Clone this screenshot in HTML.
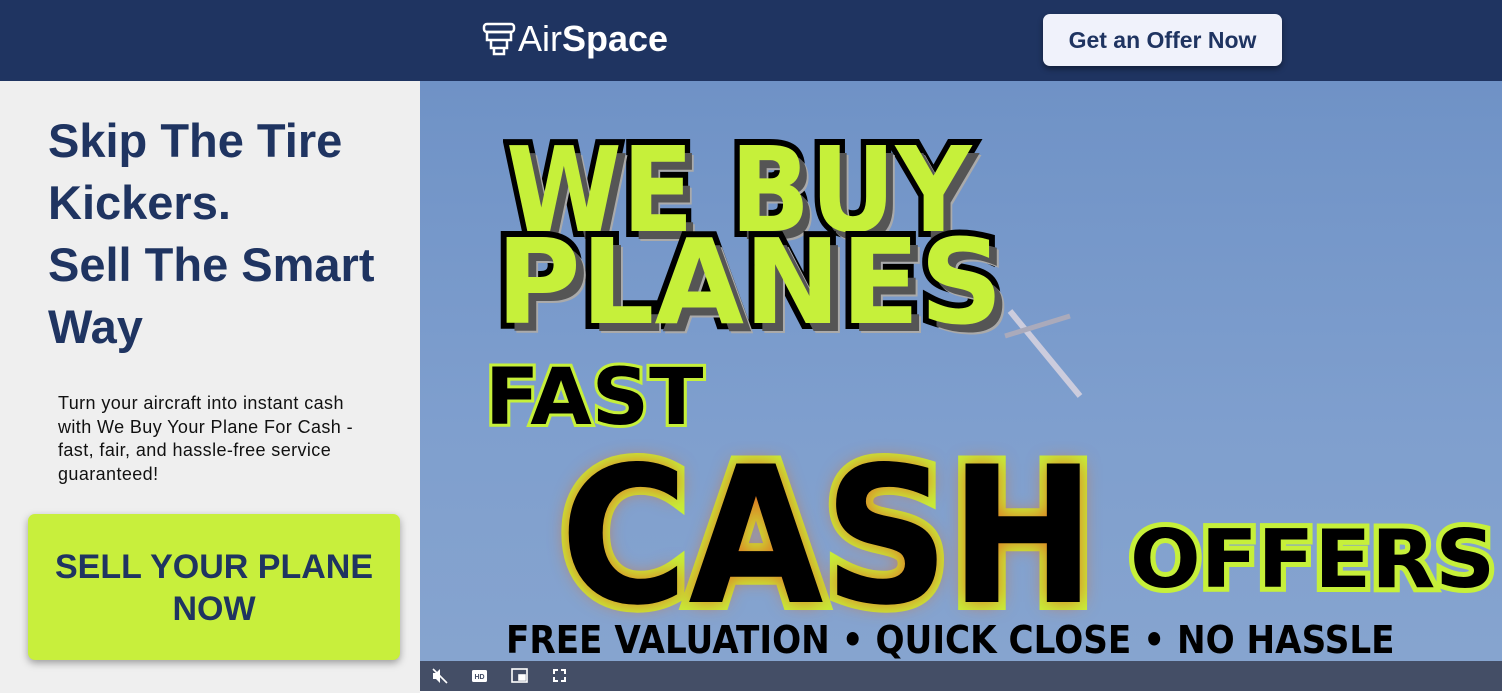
<!DOCTYPE html>
<html><head><style>
*{margin:0;padding:0;box-sizing:border-box}
body{width:1502px;height:693px;overflow:hidden;background:#fff;font-family:"Liberation Sans",sans-serif;position:relative}
.hdr{position:absolute;left:0;top:0;width:1502px;height:81px;background:#1f3461}
.logo{position:absolute;left:482px;top:18px;color:#fff;font-size:36px;display:flex;align-items:center}
.btn1{position:absolute;left:1043px;top:14px;width:239px;height:52px;background:#f0f2fb;border-radius:7px;color:#1f3461;font-weight:bold;font-size:23px;text-align:center;line-height:52px;box-shadow:0 3px 6px rgba(0,0,0,.4)}
.left{position:absolute;left:0;top:81px;width:420px;height:612px;background:#efefef}
h1{position:absolute;left:48px;top:110px;color:#1f3461;font-size:47px;line-height:62px;font-weight:bold;width:370px}
.p{position:absolute;left:58px;top:392px;font-size:18px;line-height:23.5px;color:#111;width:320px;letter-spacing:.4px}
.btn2{position:absolute;left:28px;top:514px;width:372px;height:146px;background:#c8ef3c;border-radius:7px;color:#1f3461;font-weight:bold;font-size:34px;line-height:42px;text-align:center;padding-top:32px;box-shadow:0 3px 8px rgba(0,0,0,.35)}
.vid{position:absolute;left:420px;top:81px;width:1082px;height:580px;background:linear-gradient(180deg,#6f92c6,#7f9fce 60%,#86a4cf);overflow:hidden}
.t{position:absolute;font-weight:900;font-family:"DejaVu Sans","Liberation Sans",sans-serif;white-space:nowrap;transform-origin:0 0}
.g{color:#c6f03a;-webkit-text-stroke:12px #000;paint-order:stroke fill;text-shadow:8px 8px 0 #555,10px 10px 0 #aaa}
.k{color:#000;-webkit-text-stroke:6px #c6f03a;paint-order:stroke fill}
.bar{position:absolute;left:420px;top:661px;width:1082px;height:30px;background:#444e66}
</style></head><body>
<div class="hdr">
<div class="logo"><svg width="34" height="36" viewBox="0 0 34 36" fill="none" stroke="#fff" stroke-width="2.5"><rect x="2" y="3" width="30" height="8" rx="3"/><path d="M5 11h24v8H5zM9 19h16v8H9zM12 27h10v6H12z"/></svg><span style="margin-left:2px">Air</span><b>Space</b></div>
<div class="btn1">Get an Offer Now</div>
</div>
<div class="left"></div>
<h1>Skip The Tire Kickers.<br>Sell The Smart Way</h1>
<div class="p">Turn your aircraft into instant cash with We Buy Your Plane For Cash - fast, fair, and hassle-free service guaranteed!</div>
<div class="btn2">SELL YOUR PLANE<br>NOW</div>
<div class="vid">
<svg style="position:absolute;left:580px;top:210px" width="90" height="110" viewBox="0 0 90 110"><path d="M10 20 L80 105" stroke="#ccd" stroke-width="6"/><path d="M5 45 L70 25" stroke="#aab" stroke-width="5"/></svg>
<div class="t g" style="left:86px;top:40px;font-size:118px;transform:scaleX(.89)">WE BUY</div>
<div class="t g" style="left:76px;top:132px;font-size:118px;transform:scaleX(.98)">PLANES</div>
<div class="t k" style="left:65px;top:272px;font-size:78px;transform:scaleX(1.02)">FAST</div>
<div class="t k" style="left:140px;top:345px;font-size:190px;transform:scaleX(.92);-webkit-text-stroke:16px #c6f03a;text-shadow:0 0 20px #e07020">CASH</div>
<div class="t k" style="left:710px;top:432px;font-size:80px;transform:scaleX(1.04);-webkit-text-stroke:10px #c6f03a">OFFERS</div>
<div class="t" style="left:86px;top:537px;font-size:38px;color:#000;transform:scaleX(.9)">FREE VALUATION • QUICK CLOSE • NO HASSLE</div>
</div>
<div class="bar">
<svg style="position:absolute;left:12px;top:7px" width="16" height="16" viewBox="0 0 16 16" fill="#fff"><path d="M1 5h3l4-4v14l-4-4H1z"/><path d="M1 1L15 15" stroke="#fff" stroke-width="1.6"/></svg>
<svg style="position:absolute;left:52px;top:9px" width="15" height="12"><rect width="15" height="12" rx="1.5" fill="#fff"/><text x="2.5" y="9" font-size="7" font-weight="bold" fill="#444e66" font-family="Liberation Sans">HD</text></svg>
<svg style="position:absolute;left:91px;top:7px" width="17" height="15" fill="none" stroke="#fff" stroke-width="1.6"><rect x="1" y="1" width="15" height="13"/><rect x="8" y="7" width="6" height="5" fill="#fff"/></svg>
<svg style="position:absolute;left:133px;top:8px" width="13" height="13" fill="none" stroke="#fff" stroke-width="2"><path d="M1 5V1h4M8 1h4v4M12 8v4H8M5 12H1V8"/></svg>
</div>
</body></html>
